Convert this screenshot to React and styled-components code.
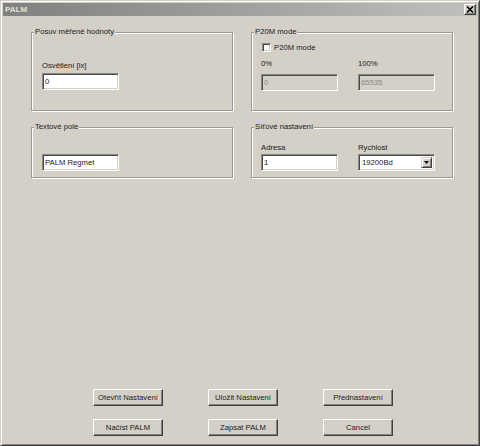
import styled, { createGlobalStyle } from 'styled-components';

const GlobalStyle = createGlobalStyle`
  html, body {
    margin: 0;
    padding: 0;
    background: #d4d0c8;
  }
  body {
    font-family: "Liberation Sans", Arial, sans-serif;
    font-size: 7.7px;
    color: #1a1a1a;
  }
`;

const Window = styled.div`
  box-sizing: border-box;
  width: 480px;
  height: 446px;
  display: flex;
  flex-direction: column;
  padding: 2px;
  background: #d4d0c8;
  border: 1px solid;
  border-color: #d4d0c8 #404040 #404040 #d4d0c8;
  box-shadow: inset 1px 1px #fff, inset -1px -1px #808080;
`;

const TitleBar = styled.div`
  height: 13px;
  display: flex;
  align-items: center;
  justify-content: space-between;
  padding: 0 1px 0 2px;
  background: linear-gradient(to right, #808080, #c0c0c0);
`;

const Title = styled.span`
  color: #e4e0d8;
  font-weight: bold;
  font-size: 8px;
  line-height: 13px;
`;

const CloseButton = styled.button`
  box-sizing: border-box;
  width: 12px;
  height: 11px;
  padding: 0;
  display: flex;
  align-items: center;
  justify-content: center;
  background: #d4d0c8;
  border: 1px solid;
  border-color: #fff #404040 #404040 #fff;
  box-shadow: inset -1px -1px #808080;
`;

const Body = styled.div`
  flex: 1;
  display: flex;
  flex-direction: column;
  padding: 11px 0 7px 28px;
`;

const Groups = styled.div`
  display: grid;
  grid-template-columns: 202px 202px;
  grid-template-rows: 84px 56px;
  column-gap: 18px;
  row-gap: 11px;
`;

const Group = styled.fieldset`
  box-sizing: border-box;
  margin: 0;
  padding: 0;
  min-width: 0;
  height: 100%;
  border: 1px solid #9c9a95;
  box-shadow: inset 1px 1px #fff, 1px 1px #fff;
`;

const Legend = styled.legend`
  margin-left: 2px;
  padding: 0 1px;
  line-height: 10px;
  background: #d4d0c8;
`;

const Content = styled.div`
  display: flex;
  flex-direction: column;
  padding: ${p => p.$top}px 0 0 ${p => p.$left}px;
`;

const Row = styled.div`
  display: flex;
  gap: ${p => p.$gap || 0}px;
  margin-top: ${p => p.$mt || 0}px;
`;

const Field = styled.div`
  display: flex;
  flex-direction: column;
  gap: ${p => p.$gap}px;
`;

const Label = styled.label`
  line-height: 10px;
  white-space: nowrap;
`;

const TextBox = styled.input`
  box-sizing: border-box;
  width: 77px;
  height: 17px;
  margin: 0;
  padding: 0 0 0 2px;
  font: inherit;
  color: #1a1a1a;
  background: #fff;
  border: 1px solid;
  border-color: #8a8883 #fff #fff #8a8883;
  box-shadow: inset 1px 1px #4a4a4a, inset -1px -1px #d4d0c8;
  outline: none;

  &:disabled {
    color: #8a8883;
    background: #d4d0c8;
  }
`;

const CheckRow = styled.label`
  display: flex;
  align-items: center;
  gap: 3px;
  height: 10px;
`;

const CheckBox = styled.input`
  appearance: none;
  box-sizing: border-box;
  width: 9px;
  height: 9px;
  margin: 0 0 0 1px;
  background: #fff;
  border: 1px solid;
  border-color: #8a8883 #fff #fff #8a8883;
  box-shadow: inset 1px 1px #4a4a4a, inset -1px -1px #d4d0c8;
`;

const Combo = styled.div`
  box-sizing: border-box;
  width: 77px;
  height: 17px;
  display: flex;
  align-items: stretch;
  padding: 2px;
  background: #fff;
  border: 1px solid;
  border-color: #8a8883 #fff #fff #8a8883;
  box-shadow: inset 1px 1px #4a4a4a, inset -1px -1px #d4d0c8;
`;

const ComboValue = styled.span`
  flex: 1;
  padding-left: 1px;
  line-height: 11px;
`;

const ComboArrow = styled.span`
  box-sizing: border-box;
  width: 11px;
  display: flex;
  align-items: center;
  justify-content: center;
  background: #d4d0c8;
  border: 1px solid;
  border-color: #d4d0c8 #404040 #404040 #d4d0c8;
  box-shadow: inset 1px 1px #fff, inset -1px -1px #808080;
`;

const Buttons = styled.div`
  margin-top: auto;
  display: grid;
  grid-template-columns: repeat(3, 70px);
  grid-auto-rows: 17px;
  column-gap: 45px;
  row-gap: 13px;
  padding-left: 62px;
`;

const Button = styled.button`
  box-sizing: border-box;
  margin: 0;
  padding: 0;
  font: inherit;
  color: #1a1a1a;
  background: #d4d0c8;
  border: 1px solid;
  border-color: #fff #404040 #404040 #fff;
  box-shadow: inset -1px -1px #808080;
`;

const App = () => {
  return (
    <Window>
      <GlobalStyle />
      <TitleBar>
        <Title>PALM</Title>
        <CloseButton aria-label="Close">
          <svg width="8" height="7" viewBox="0 0 8 7">
            <path d="M1 0.5 L7 6.5 M7 0.5 L1 6.5" stroke="#000" strokeWidth="1.6" />
          </svg>
        </CloseButton>
      </TitleBar>
      <Body>
        <Groups>
          <Group>
            <Legend>Posuv měřené hodnoty</Legend>
            <Content $top={24} $left={10}>
              <Field $gap={2}>
                <Label>Osvětlení [lx]</Label>
                <TextBox defaultValue="0" />
              </Field>
            </Content>
          </Group>

          <Group>
            <Legend>P20M mode</Legend>
            <Content $top={5} $left={9}>
              <CheckRow>
                <CheckBox type="checkbox" />
                P20M mode
              </CheckRow>
              <Row $gap={20} $mt={7}>
                <Field $gap={5}>
                  <Label>0%</Label>
                  <TextBox defaultValue="0" disabled />
                </Field>
                <Field $gap={5}>
                  <Label>100%</Label>
                  <TextBox defaultValue="65535" disabled />
                </Field>
              </Row>
            </Content>
          </Group>

          <Group>
            <Legend>Textové pole</Legend>
            <Content $top={22} $left={10}>
              <TextBox defaultValue="PALM Regmet" />
            </Content>
          </Group>

          <Group>
            <Legend>Síťové nastavení</Legend>
            <Content $top={11} $left={9}>
              <Row $gap={20}>
                <Field $gap={1}>
                  <Label>Adresa</Label>
                  <TextBox defaultValue="1" />
                </Field>
                <Field $gap={1}>
                  <Label>Rychlost</Label>
                  <Combo>
                    <ComboValue>19200Bd</ComboValue>
                    <ComboArrow>
                      <svg width="5" height="3" viewBox="0 0 5 3">
                        <path d="M0 0 H5 L2.5 3 Z" fill="#000" />
                      </svg>
                    </ComboArrow>
                  </Combo>
                </Field>
              </Row>
            </Content>
          </Group>
        </Groups>

        <Buttons>
          <Button>Otevřít Nastavení</Button>
          <Button>Uložit Nastavení</Button>
          <Button>Přednastavení</Button>
          <Button>Načíst PALM</Button>
          <Button>Zapsat PALM</Button>
          <Button>Cancel</Button>
        </Buttons>
      </Body>
    </Window>
  );
};

export default App;
